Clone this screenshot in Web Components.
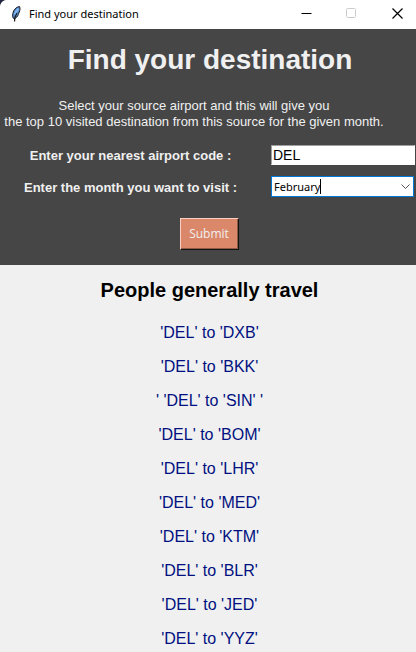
<!DOCTYPE html>
<html lang="en">
<head>
<meta charset="utf-8">
<title>Find your destination</title>
<style>
html, body { margin: 0; min-height: 100%; background: #20263f; }
body { font-family: "Liberation Sans", Arial, sans-serif; }
</style>
</head>
<body>
<app-window>
  <title-bar slot="bar">Find your destination</title-bar>
  <search-panel>
    <span slot="heading">Find your destination</span>
    <span slot="intro">Select your source airport and this will give you<br>the top 10 visited destination from this source for the given month.</span>
  </search-panel>
  <route-list heading="People generally travel">
    <route-item>'DEL' to 'DXB'</route-item>
    <route-item>'DEL' to 'BKK'</route-item>
    <route-item>' 'DEL' to 'SIN' '</route-item>
    <route-item>'DEL' to 'BOM'</route-item>
    <route-item>'DEL' to 'LHR'</route-item>
    <route-item>'DEL' to 'MED'</route-item>
    <route-item>'DEL' to 'KTM'</route-item>
    <route-item>'DEL' to 'BLR'</route-item>
    <route-item>'DEL' to 'JED'</route-item>
    <route-item>'DEL' to 'YYZ'</route-item>
  </route-list>
</app-window>
<script>
function define(name, html, setup) {
  const t = document.createElement('template');
  t.innerHTML = html;
  customElements.define(name, class extends HTMLElement {
    constructor() {
      super();
      this.attachShadow({ mode: 'open' }).append(t.content.cloneNode(true));
    }
    connectedCallback() { if (setup) setup(this, this.shadowRoot); }
  });
}

define('app-window', `
<style>
:host { display: flex; flex-direction: column; min-height: 100vh; box-sizing: border-box;
  background: #f0f0f0; border-radius: 7px 0 0 4px; overflow: hidden; }
</style>
<slot name="bar"></slot><slot></slot>`);

define('title-bar', `
<style>
:host { display: flex; align-items: center; height: 29px; background: #fff; color: #000;
  font: 11px/16px "Noto Sans", "Open Sans", sans-serif; }
.logo { width: 16px; height: 18px; margin: 0 5px 4px 8px; }
.text { flex: 1; padding-bottom: 1px; white-space: nowrap; }
button { box-sizing: border-box; display: flex; align-items: center; justify-content: center; width: 45px; height: 29px;
  padding: 0 0 2px; border: 0; background: none; }
button:last-child { width: 42px; padding-left: 4px; }
svg { flex: none; }
</style>
<svg class="logo" viewBox="0 0 16 18" aria-hidden="true">
  <path d="M11.5 2.5C8 3 5.5 6 4.8 9.5c-.4 2 0 3.500.3 4.500l1.200.8c2-1.200 3.500-2.300 4-4.300.2-1 .6-1.500 1-2.500.7-1.800 1-3.500.2-5.500z" fill="#5a8fd0" stroke="#16181c"/>
  <path d="M10.500 4.500C9 6 7.500 8 7 10.500" fill="none" stroke="#7fb4f0" stroke-width="2"/>
  <path d="M9 9C7.500 11 6.500 13 6.500 17.500" fill="none" stroke="#111" stroke-width="1.200"/>
</svg>
<span class="text"><slot></slot></span>
<button type="button" aria-label="Minimize"><svg width="11" height="11" viewBox="0 0 11 11"><path d="M0.500 5.500h10" stroke="#000"/></svg></button>
<button type="button" aria-label="Maximize" disabled><svg width="11" height="11" viewBox="0 0 11 11"><rect x=".5" y=".5" width="9" height="9" rx="1" fill="none" stroke="#ccc"/></svg></button>
<button type="button" aria-label="Close"><svg width="11" height="11" viewBox="0 0 11 11"><path d="M.5.5l10 10M10.500.5l-10 10" stroke="#000" stroke-width="1.200"/></svg></button>`);

define('search-panel', `
<style>
:host { display: block; background: #464646; color: #f0f0f0; padding: 13px 0 15px; }
h1 { margin: 0 0 20px; padding-left: 4px; font-size: 28px; line-height: 36px; text-align: center; white-space: nowrap; }
p { margin: 0 0 15px; padding-right: 28px; font-size: 13px; line-height: 16px; text-align: center; white-space: nowrap; }
form { display: grid; grid-template-columns: 261px 1fr; column-gap: 10px; row-gap: 11px; align-items: center; padding-right: 1px; }
label { padding-top: 2px; font-size: 13px; line-height: 16px; font-weight: bold; text-align: center; }
input { box-sizing: border-box; width: 100%; min-width: 0; height: 20px; margin: 0; padding: 0 1px; border: 1px solid;
  border-color: #a0a0a0 #fff #fff #a0a0a0; background: #fff; color: #000; border-radius: 0;
  font: 14px/18px "Liberation Sans", Arial, sans-serif; }
button { grid-column: 1 / -1; justify-self: center; margin: 10px 0 0 3px; width: 59px; height: 32px; padding: 0;
  border: 1px solid; border-color: #f8cfc0 #111 #111 #f8cfc0; box-shadow: inset -1px -1px #8f5a46; background: #db8769; color: #f0f0f0;
  font: 12px/16px "Open Sans", "Noto Sans", sans-serif; }
</style>
<h1><slot name="heading"></slot></h1>
<p><slot name="intro"></slot></p>
<form>
  <label for="code">Enter your nearest airport code :</label>
  <input id="code" type="text" value="DEL">
  <label id="month-label">Enter the month you want to visit :</label>
  <month-picker label="Enter the month you want to visit"></month-picker>
  <button type="button">Submit</button>
</form>`, (host, root) => {
  root.getElementById('month-label').onclick = () => root.querySelector('month-picker').shadowRoot.querySelector('select').focus();
});

define('month-picker', `
<style>
:host { display: block; position: relative; margin-right: 1px; }
select { display: block; appearance: none; box-sizing: border-box; width: 100%; height: 21px; margin: 0; padding: 0 20px 0 2px;
  border: 1px solid #0078d7; border-radius: 0; background: #fff; color: #000; outline: 0;
  font: 11px/19px "Noto Sans", "Open Sans", sans-serif; }
svg { position: absolute; right: 4px; top: 8px; pointer-events: none; }
.caret { position: absolute; left: 49px; top: 3px; width: 1px; height: 15px; background: #000; }
</style>
<select></select><span class="caret"></span>
<svg width="9" height="6" viewBox="0 0 9 6"><path d="M.5.5l4 4 4-4" fill="none" stroke="#555"/></svg>`, (host, root) => {
  const s = root.querySelector('select');
  s.setAttribute('aria-label', host.getAttribute('label'));
  for (const m of ['January','February','March','April','May','June','July','August','September','October','November','December'])
    s.add(new Option(m, m, m === 'February', m === 'February'));
});

define('route-list', `
<style>
:host { display: block; flex: 1; padding: 13px 0 0 3px; text-align: center; }
h2 { margin: 0 0 14px; color: #000; font-size: 20px; line-height: 24px; }
div { display: flex; flex-direction: column; }
</style>
<h2></h2><div role="list"><slot></slot></div>`, (host, root) => {
  root.querySelector('h2').textContent = host.getAttribute('heading');
});

define('route-item', `
<style>:host { display: block; padding: 8px 0; color: #001080; font-size: 16px; line-height: 18px; }</style>
<slot></slot>`, host => host.setAttribute('role', 'listitem'));
</script>
</body>
</html>
